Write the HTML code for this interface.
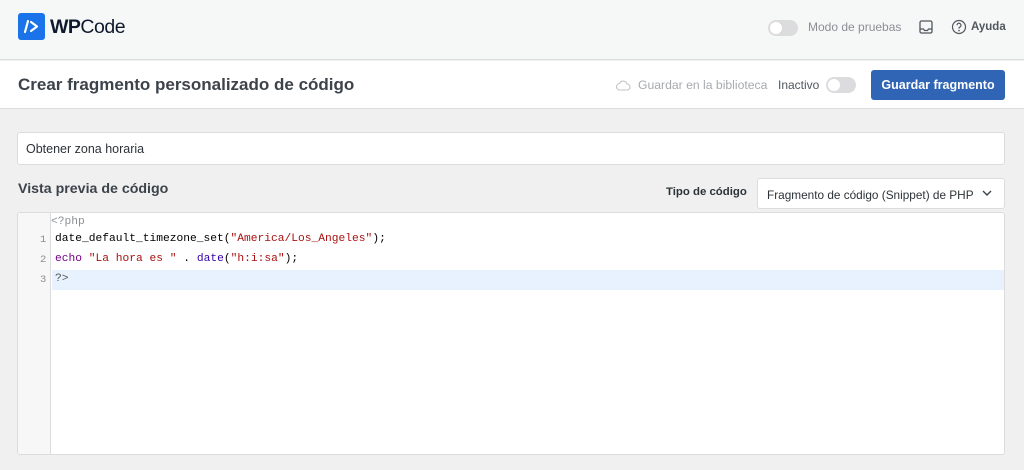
<!DOCTYPE html>
<html><head><meta charset="utf-8"><style>
*{box-sizing:border-box;margin:0;padding:0}
body{width:1024px;height:470px;overflow:hidden;background:#f0f0f1;font-family:"Liberation Sans",sans-serif;color:#3c434a;position:relative}
.hdr{position:absolute;left:0;top:0;width:1024px;height:60px;background:#f6f7f7;border-bottom:1px solid #dcdcde}
.bar{position:absolute;left:0;top:61px;width:1024px;height:48px;background:#fff;border-bottom:1px solid #dcdcde}
.tg{position:absolute;width:30px;height:16px;border-radius:8px;background:#dcdcde}
.tg:after{content:"";position:absolute;left:2px;top:2px;width:12px;height:12px;border-radius:50%;background:#fff}
.abs{position:absolute;white-space:nowrap}
.code{font-family:"Liberation Mono","DejaVu Sans Mono",monospace;font-size:11.25px}
</style></head><body>
<div class="hdr">
 <div class="abs" style="left:18px;top:13px;width:27px;height:27px;background:#1a73e8;border-radius:3px">
  <svg width="27" height="27" viewBox="0 0 27 27"><path d="M10 8 L7 19" stroke="#fff" stroke-width="2.2" stroke-linecap="round"/><path d="M13 9 L19 13.5 L13 18" stroke="#fff" stroke-width="2.2" fill="none" stroke-linecap="round" stroke-linejoin="round"/></svg>
 </div>
 <div class="abs" style="left:50px;top:16px;font-size:19.5px;color:#0f1a2d;letter-spacing:-0.5px"><b>WP</b>Code</div>
 <div class="tg" style="left:768px;top:20px"></div>
 <div class="abs" style="left:808px;top:20px;font-size:12px;color:#8c8f94">Modo de pruebas</div>
 <svg class="abs" style="left:919px;top:20px" width="14" height="14" viewBox="0 0 14 14"><rect x="1" y="1" width="12" height="12" rx="1.5" fill="none" stroke="#50575e" stroke-width="1.3"/><path d="M1 9 H4.5 L5.5 10.5 H8.5 L9.5 9 H13" fill="none" stroke="#50575e" stroke-width="1.2"/></svg>
 <svg class="abs" style="left:951px;top:19px" width="16" height="16" viewBox="0 0 16 16"><circle cx="8" cy="8" r="6.5" fill="none" stroke="#50575e" stroke-width="1.2"/><path d="M6 6.3 A2 2 0 1 1 8.5 8.2 C8 8.5 8 9 8 9.6" fill="none" stroke="#50575e" stroke-width="1.2"/><circle cx="8" cy="11.6" r="0.8" fill="#50575e"/></svg>
 <div class="abs" style="left:971px;top:21px;font-size:11.5px;color:#50575e;font-weight:bold">Ayuda</div>
</div>
<div class="bar">
 <div class="abs" style="left:18px;top:14px;font-size:17px;font-weight:bold;color:#3c434a">Crear fragmento personalizado de código</div>
 <svg class="abs" style="left:615px;top:18px" width="16" height="12" viewBox="0 0 16 12"><path d="M4 11 H12 A3 3 0 0 0 12 5 A4 4 0 0 0 4.5 4.5 A3.3 3.3 0 0 0 4 11Z" fill="none" stroke="#c3c4c7" stroke-width="1.1"/></svg>
 <div class="abs" style="left:638px;top:17px;font-size:12.2px;color:#a7aaad">Guardar en la biblioteca</div>
 <div class="abs" style="left:778px;top:17px;font-size:12px;color:#50575e">Inactivo</div>
 <div class="tg" style="left:826px;top:16px"></div>
 <div class="abs" style="left:871px;top:9px;width:134px;height:30px;background:#3065b5;border-radius:3px;color:#fff;font-size:12.5px;font-weight:bold;text-align:center;line-height:30px">Guardar fragmento</div>
</div>
<div class="abs" style="left:17px;top:132px;width:988px;height:33px;background:#fff;border:1px solid #dcdcde;border-radius:3px;font-size:12.5px;color:#2c3338;padding:9px 8px">Obtener zona horaria</div>
<div class="abs" style="left:18px;top:181px;font-size:14.2px;font-weight:bold;color:#3c434a">Vista previa de código</div>
<div class="abs" style="left:666px;top:186px;font-size:11.4px;font-weight:bold;color:#2c3338">Tipo de código</div>
<div class="abs" style="left:757px;top:178px;width:248px;height:31px;background:#fff;border:1px solid #dcdcde;border-radius:3px;font-size:11.8px;color:#2c3338;padding:9px 9px">Fragmento de código (Snippet) de PHP
 <svg style="position:absolute;right:12px;top:11px" width="10" height="7" viewBox="0 0 10 7"><path d="M1 1 L5 5 L9 1" fill="none" stroke="#3c434a" stroke-width="1.4"/></svg></div>
<div class="abs" style="left:17px;top:212px;width:988px;height:243px;background:#fff;border:1px solid #dcdcde;border-radius:3px;overflow:hidden">
 <div class="abs" style="left:0;top:0;width:33px;height:243px;background:#f7f7f7;border-right:1px solid #dcdcde"></div>
 <div class="abs" style="left:34px;top:57px;width:960px;height:20px;background:#e8f2fe"></div>
 <div class="abs code" style="left:33px;top:3px;color:#8c8f94">&lt;?php</div>
 <div class="abs code" style="left:22px;top:21px;color:#8c8f94;font-size:10.5px">1</div>
 <div class="abs code" style="left:22px;top:41px;color:#8c8f94;font-size:10.5px">2</div>
 <div class="abs code" style="left:22px;top:61px;color:#8c8f94;font-size:10.5px">3</div>
 <div class="abs code" style="left:37px;top:20px;color:#000">date_default_timezone_set(<span style="color:#a11">"America/Los_Angeles"</span>);</div>
 <div class="abs code" style="left:37px;top:40px;color:#000"><span style="color:#770088">echo</span> <span style="color:#a11">"La hora es "</span> . <span style="color:#30a">date</span>(<span style="color:#a11">"h:i:sa"</span>);</div>
 <div class="abs code" style="left:37px;top:60px;color:#555">?&gt;</div>
</div>
</body></html>
